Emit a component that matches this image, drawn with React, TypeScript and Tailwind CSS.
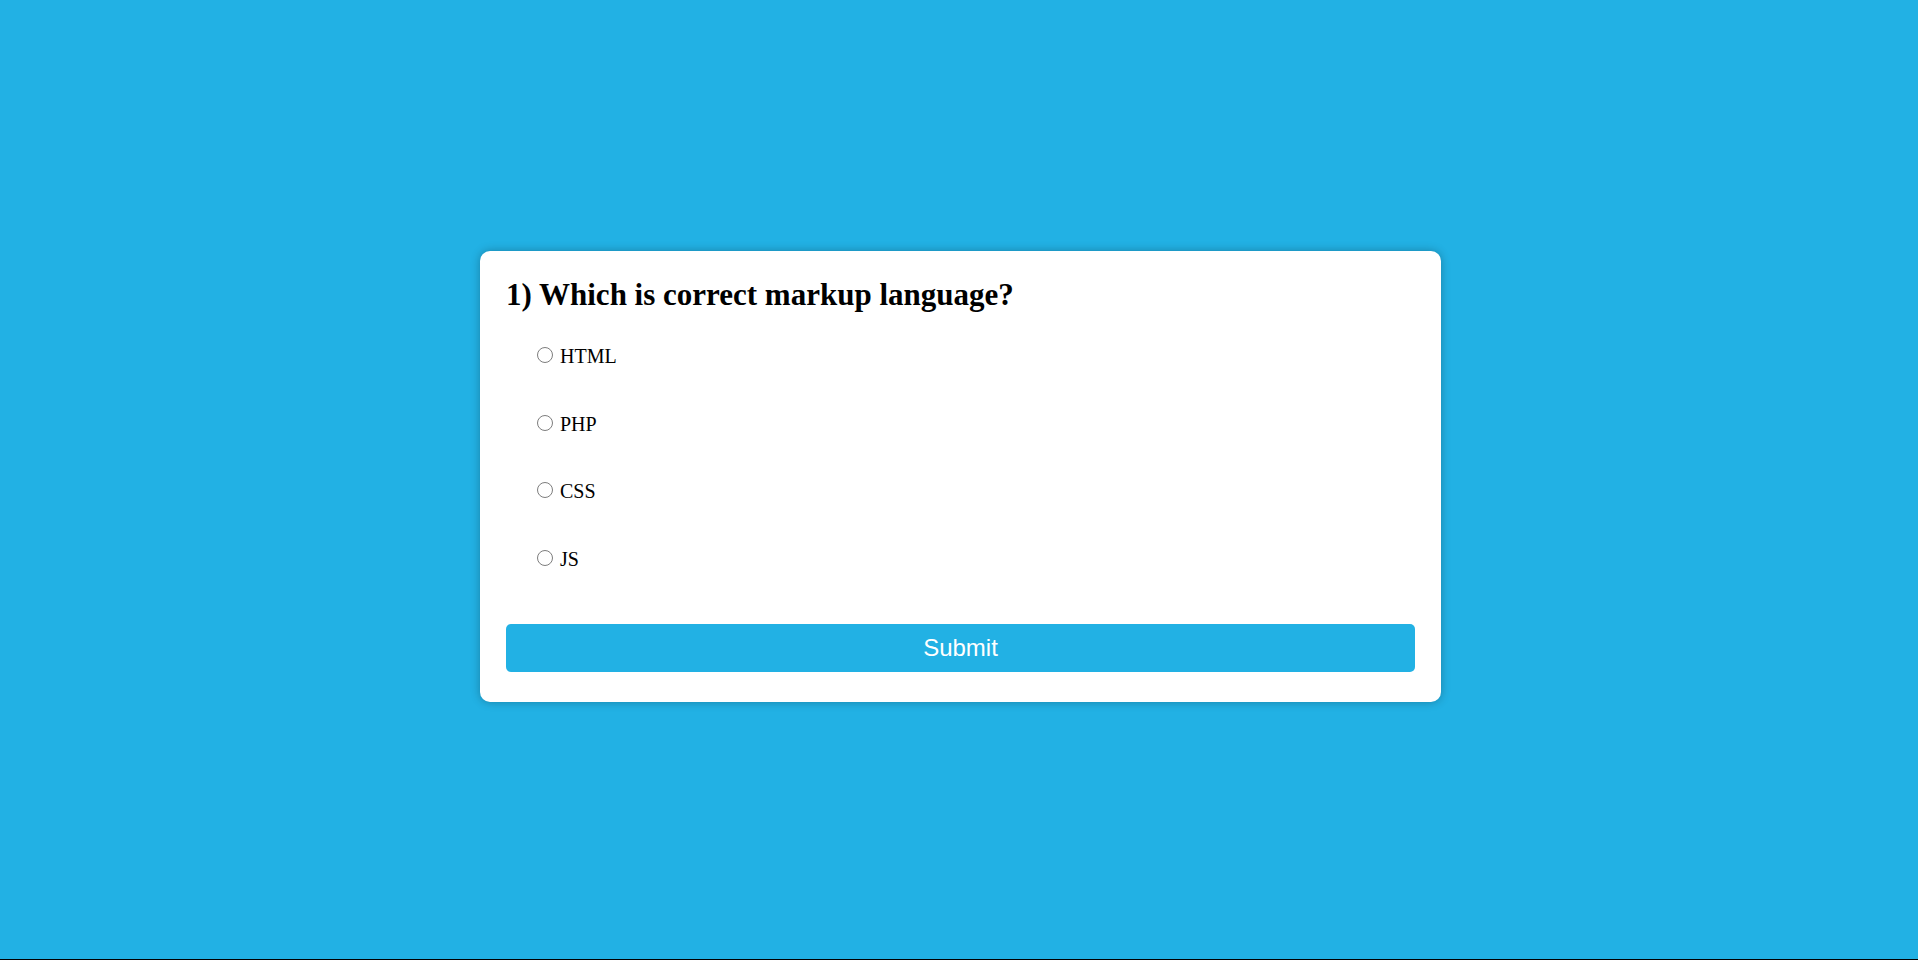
import { useState } from "react"

const options = ["HTML", "PHP", "CSS", "JS"]

const App = () => {
    const [picked, setPicked] = useState<string | null>(null)

    return (
        <div className="h-[960px] bg-[#22b1e4] border-b border-black flex justify-center pt-[251px] pl-[3px]">
            <div className="w-[961px] h-fit bg-white rounded-[10px] shadow-[0_0_10px_rgba(0,0,0,0.28)] px-[26px] pt-[27px] pb-[30px]">
                <h2 className="text-[31px] leading-[34px] font-bold text-black font-['Liberation_Serif',serif]">
                    1) Which is correct markup language?
                </h2>
                <div className="flex flex-col gap-[44.5px] mt-[33px] pl-[31px]">
                    {options.map((opt) => (
                        <label
                            key={opt}
                            className="flex items-center h-[23px] text-[20px] leading-[23px] text-black font-['Liberation_Serif',serif] cursor-pointer"
                        >
                            <input
                                type="radio"
                                name="answer"
                                className="appearance-none w-[16px] h-[16px] mb-[3px] mr-[7px] rounded-full border-[1.5px] border-[#7d7d7d] bg-white checked:border-[5px] checked:border-[#0075ff]"
                                checked={picked === opt}
                                onChange={() => setPicked(opt)}
                            />
                            <span>{opt}</span>
                        </label>
                    ))}
                </div>
                <button className="w-full h-[48px] mt-[53px] bg-[#22b1e4] text-white text-[24px] font-['Liberation_Sans',sans-serif] rounded-[5px]">
                    Submit
                </button>
            </div>
        </div>
    )
}

export default App
